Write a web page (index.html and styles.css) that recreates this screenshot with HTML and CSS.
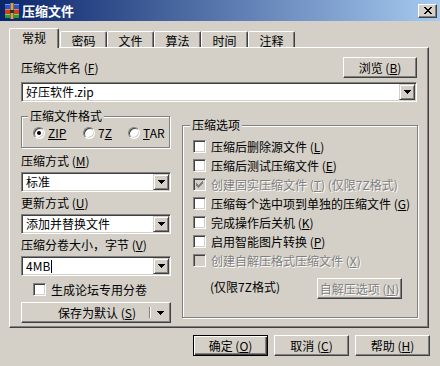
FILE: index.html
```html
<!DOCTYPE html>
<html lang="zh-CN">
<head>
<meta charset="utf-8">
<title>压缩文件</title>
<link rel="stylesheet" href="styles.css">
</head>
<body>
<div class="window">
  <div class="titlebar">
    <svg class="app-icon" width="16" height="16" viewBox="0 0 16 16" shape-rendering="crispEdges">
      <rect x="1" y="1" width="14" height="5" fill="#2a55c8"/>
      <rect x="1" y="1" width="14" height="1" fill="#6f9cf0"/>
      <rect x="1" y="6" width="14" height="5" fill="#d0401c"/>
      <rect x="1" y="6" width="14" height="1" fill="#f08040"/>
      <rect x="1" y="11" width="14" height="4" fill="#2f9a2f"/>
      <rect x="1" y="11" width="14" height="1" fill="#80d060"/>
      <rect x="6" y="0" width="4" height="16" fill="#8a6a3a"/>
      <rect x="7" y="0" width="2" height="16" fill="#c8a468"/>
      <rect x="6" y="7" width="4" height="3" fill="#303030"/>
    </svg>
    <span class="title">压缩文件</span>
    <div class="close-btn">
      <svg width="8" height="7" viewBox="0 0 8 7" shape-rendering="crispEdges"><path d="M0 0h2v1H0z M6 0h2v1H6z M1 1h2v1H1z M5 1h2v1H5z M2 2h4v1H2z M3 3h2v1H3z M2 4h4v1H2z M1 5h2v1H1z M5 5h2v1H5z M0 6h2v1H0z M6 6h2v1H6z" fill="#000"/></svg>
    </div>
  </div>

  <div class="tabs">
    <div class="tab active">常规</div>
    <div class="tab">密码</div>
    <div class="tab">文件</div>
    <div class="tab">算法</div>
    <div class="tab">时间</div>
    <div class="tab">注释</div>
  </div>

  <div class="panel">
    <div class="row-top">
      <span class="label">压缩文件名 (<u>F</u>)</span>
      <div class="btn browse">浏览 (<u>B</u>)</div>
    </div>
    <div class="combo wide">
      <span class="combo-text">好压软件.zip</span>
      <span class="combo-btn"><svg width="7" height="4" viewBox="0 0 7 4" shape-rendering="crispEdges"><path d="M0 0h7v1H0z M1 1h5v1H1z M2 2h3v1H2z M3 3h1v1H3z" fill="#000"/></svg></span>
    </div>

    <div class="columns">
      <div class="left-col">
        <div class="group format">
          <div class="group-title">压缩文件格式</div>
          <div class="radio-row">
            <span class="radio-item r1"><span class="radio checked"></span><span><u>ZIP</u></span></span>
            <span class="radio-item r2"><span class="radio"></span><span>7<u>Z</u></span></span>
            <span class="radio-item"><span class="radio"></span><span><u>T</u>AR</span></span>
          </div>
        </div>

        <div class="field-label first">压缩方式 (<u>M</u>)</div>
        <div class="combo">
          <span class="combo-text">标准</span>
          <span class="combo-btn"><svg width="7" height="4" viewBox="0 0 7 4" shape-rendering="crispEdges"><path d="M0 0h7v1H0z M1 1h5v1H1z M2 2h3v1H2z M3 3h1v1H3z" fill="#000"/></svg></span>
        </div>

        <div class="field-label">更新方式 (<u>U</u>)</div>
        <div class="combo">
          <span class="combo-text">添加并替换文件</span>
          <span class="combo-btn"><svg width="7" height="4" viewBox="0 0 7 4" shape-rendering="crispEdges"><path d="M0 0h7v1H0z M1 1h5v1H1z M2 2h3v1H2z M3 3h1v1H3z" fill="#000"/></svg></span>
        </div>

        <div class="field-label">压缩分卷大小，字节 (<u>V</u>)</div>
        <div class="combo">
          <span class="combo-text">4MB<span class="caret"></span></span>
          <span class="combo-btn"><svg width="7" height="4" viewBox="0 0 7 4" shape-rendering="crispEdges"><path d="M0 0h7v1H0z M1 1h5v1H1z M2 2h3v1H2z M3 3h1v1H3z" fill="#000"/></svg></span>
        </div>

        <div class="check-row forum">
          <span class="cb"></span><span>生成论坛专用分卷</span>
        </div>

        <div class="btn split">
          <span class="split-text">保存为默认 (<u>S</u>)</span>
          <span class="split-sep"></span>
          <svg class="split-arrow" width="7" height="4" viewBox="0 0 7 4" shape-rendering="crispEdges"><path d="M0 0h7v1H0z M1 1h5v1H1z M2 2h3v1H2z M3 3h1v1H3z" fill="#000"/></svg>
        </div>
      </div>

      <div class="group options">
        <div class="group-title">压缩选项</div>
        <div class="check-row"><span class="cb"></span><span>压缩后删除源文件 (<u>L</u>)</span></div>
        <div class="check-row"><span class="cb"></span><span>压缩后测试压缩文件 (<u>E</u>)</span></div>
        <div class="check-row disabled"><span class="cb"><svg width="7" height="7" viewBox="0 0 7 7" shape-rendering="crispEdges"><path d="M6 0h1v1H6z M5 1h2v1H5z M0 2h1v1H0z M4 2h3v1H4z M0 3h2v1H0z M3 3h3v1H3z M0 4h5v1H0z M1 5h3v1H1z M2 6h1v1H2z" fill="#808080"/></svg></span><span>创建固实压缩文件 (<u>T</u>) (仅限7Z格式)</span></div>
        <div class="check-row"><span class="cb"></span><span>压缩每个选中项到单独的压缩文件 (<u>G</u>)</span></div>
        <div class="check-row"><span class="cb"></span><span>完成操作后关机 (<u>K</u>)</span></div>
        <div class="check-row"><span class="cb"></span><span>启用智能图片转换 (<u>P</u>)</span></div>
        <div class="check-row disabled"><span class="cb"></span><span>创建自解压格式压缩文件 (<u>X</u>)</span></div>
        <div class="sfx-row">
          <span class="sfx-note">(仅限7Z格式)</span>
          <div class="btn disabled sfx-btn">自解压选项 (<u>N</u>)</div>
        </div>
      </div>
    </div>
  </div>

  <div class="footer">
    <div class="btn default">确定 (<u>O</u>)</div>
    <div class="btn">取消 (<u>C</u>)</div>
    <div class="btn">帮助 (<u>H</u>)</div>
  </div>
</div>
</body>
</html>
```

FILE: styles.css
```css
* { box-sizing: border-box; }

html, body {
  margin: 0;
  padding: 0;
}

body {
  width: 440px;
  height: 366px;
  overflow: hidden;
  background: #d4d0c8;
  color: #000;
  font-family: "Noto Sans CJK SC", "Noto Sans", sans-serif;
  font-size: 12px;
  line-height: 14px;
}

u { text-decoration: underline; text-underline-offset: 1px; }

.window {
  width: 440px;
  height: 366px;
  display: flex;
  flex-direction: column;
}

/* title bar */
.titlebar {
  height: 21px;
  flex: none;
  display: flex;
  align-items: center;
  padding: 0 3px 0 4px;
  background: linear-gradient(to right, #0a246a, #a6caf0);
}

.app-icon { flex: none; margin-right: 2px; }

.title {
  flex: 1;
  color: #fff;
  font-weight: bold;
  font-size: 13px;
  letter-spacing: 0;
}

.close-btn {
  width: 19px;
  height: 14px;
  display: flex;
  align-items: center;
  justify-content: center;
  background: #d4d0c8;
  border: 1px solid;
  border-color: #fff #404040 #404040 #fff;
  box-shadow: inset -1px -1px #808080;
}

/* tabs */
.tabs {
  height: 26px;
  flex: none;
  display: flex;
  align-items: flex-end;
  padding-left: 9px;
}

.tab {
  width: 47px;
  height: 16px;
  display: flex;
  align-items: center;
  justify-content: center;
  border: 1px solid;
  border-bottom: none;
  border-color: #fff #404040 transparent #fff;
  border-radius: 2px 2px 0 0;
  box-shadow: inset -1px 0 #808080;
  padding-top: 2px;
}

.tab.active {
  width: 50px;
  height: 20px;
  margin-bottom: -1px;
  margin-right: 1px;
  position: relative;
  z-index: 1;
  background: #d4d0c8;
  padding-top: 0;
  padding-bottom: 2px;
}

/* panel */
.panel {
  margin-left: 9px;
  width: 420px;
  height: 281px;
  flex: none;
  border: 1px solid;
  border-color: #fff #404040 #404040 #fff;
  box-shadow: inset -1px -1px #808080;
  padding: 9px 11px 0 11px;
  display: flex;
  flex-direction: column;
}

.row-top {
  height: 21px;
  display: flex;
  align-items: center;
  justify-content: space-between;
}

/* buttons */
.btn {
  height: 21px;
  display: flex;
  align-items: center;
  justify-content: center;
  background: #d4d0c8;
  border: 1px solid;
  border-color: #fff #404040 #404040 #fff;
  box-shadow: inset -1px -1px #808080;
  white-space: nowrap;
}

.browse { width: 74px; }

.btn.default {
  border-color: #000;
  box-shadow: inset 1px 1px #fff, inset -1px -1px #404040, inset -2px -2px #808080;
}

.btn.disabled {
  color: #808080;
  text-shadow: 1px 1px #fff;
}

/* combo */
.combo {
  height: 20px;
  display: flex;
  align-items: center;
  background: #fff;
  border: 1px solid;
  border-color: #808080 #fff #fff #808080;
  box-shadow: inset 1px 1px #404040, inset -1px -1px #d4d0c8;
  padding: 1px;
}

.combo.wide { margin-top: 4px; }

.combo-text {
  flex: 1;
  padding-left: 3px;
  display: flex;
  align-items: center;
  white-space: nowrap;
}

.caret {
  width: 1px;
  height: 13px;
  background: #000;
  margin-left: 1px;
}

.combo-btn {
  width: 16px;
  height: 16px;
  flex: none;
  display: flex;
  align-items: center;
  justify-content: center;
  background: #d4d0c8;
  border: 1px solid;
  border-color: #d4d0c8 #404040 #404040 #d4d0c8;
  box-shadow: inset 1px 1px #fff, inset -1px -1px #808080;
}

/* columns */
.columns {
  display: flex;
  align-items: flex-start;
  gap: 11px;
  margin-top: 14px;
}

.left-col {
  width: 150px;
  flex: none;
  display: flex;
  flex-direction: column;
}

.group {
  border: 1px solid #808080;
  box-shadow: inset 1px 1px #fff, 1px 1px #fff;
}

.group-title {
  margin-top: -8px;
  width: max-content;
  padding: 0 2px;
  background: #d4d0c8;
  line-height: 14px;
}

.format { padding: 0 0 7px 0; width: 149px; }
.format .group-title { margin-left: 6px; }

.radio-row {
  margin-top: 3px;
  height: 14px;
  display: flex;
  align-items: center;
  padding-left: 11px;
}

.radio-item {
  display: flex;
  align-items: center;
  gap: 3px;
  flex: none;
}

.radio-item.r1 { width: 50px; }
.radio-item.r2 { width: 45px; }

.radio {
  width: 12px;
  height: 12px;
  flex: none;
  border-radius: 50%;
  background: #fff;
  border: 1px solid;
  border-color: #808080 #fff #fff #808080;
  box-shadow: inset 1px 1px #404040, inset -1px -1px #d4d0c8;
  display: flex;
  align-items: center;
  justify-content: center;
}

.radio.checked::after {
  content: "";
  width: 4px;
  height: 4px;
  border-radius: 50%;
  background: #000;
}

.field-label {
  margin-top: 4px;
  margin-bottom: 4px;
  height: 14px;
  white-space: nowrap;
}

.field-label.first { margin-top: 6px; }

/* checkboxes */
.check-row {
  height: 19px;
  display: flex;
  align-items: center;
  gap: 5px;
  white-space: nowrap;
}

.cb {
  width: 13px;
  height: 13px;
  flex: none;
  background: #fff;
  border: 1px solid;
  border-color: #808080 #fff #fff #808080;
  box-shadow: inset 1px 1px #404040, inset -1px -1px #d4d0c8;
  display: flex;
  align-items: center;
  justify-content: center;
}

.check-row.disabled { color: #808080; text-shadow: 1px 1px #fff; }
.check-row.disabled .cb { background: #d4d0c8; }

.forum {
  margin-top: 4px;
  padding-left: 12px;
}

.split {
  margin-top: 3px;
  width: 150px;
  justify-content: flex-start;
  padding-left: 36px;
}

.split-text { width: 90px; }

.split-sep {
  width: 2px;
  height: 11px;
  border-left: 1px solid #808080;
  border-right: 1px solid #fff;
  margin-left: 1px;
}

.split-arrow { margin-left: 6px; }

/* options group */
.options {
  width: 236px;
  flex: none;
  margin-top: 9px;
  height: 193px;
  padding: 0 0 0 10px;
}

.options .group-title { margin-left: -3px; margin-bottom: 5px; }

.sfx-row {
  margin-top: 8px;
  display: flex;
  align-items: flex-start;
  padding-left: 17px;
}

.sfx-note { padding-top: 2px; }

.sfx-btn {
  width: 85px;
  margin-left: auto;
  margin-right: 15px;
}

/* footer */
.footer {
  display: flex;
  justify-content: flex-end;
  gap: 6px;
  padding-right: 10px;
  margin-top: 7px;
}

.footer .btn { width: 75px; }
```
